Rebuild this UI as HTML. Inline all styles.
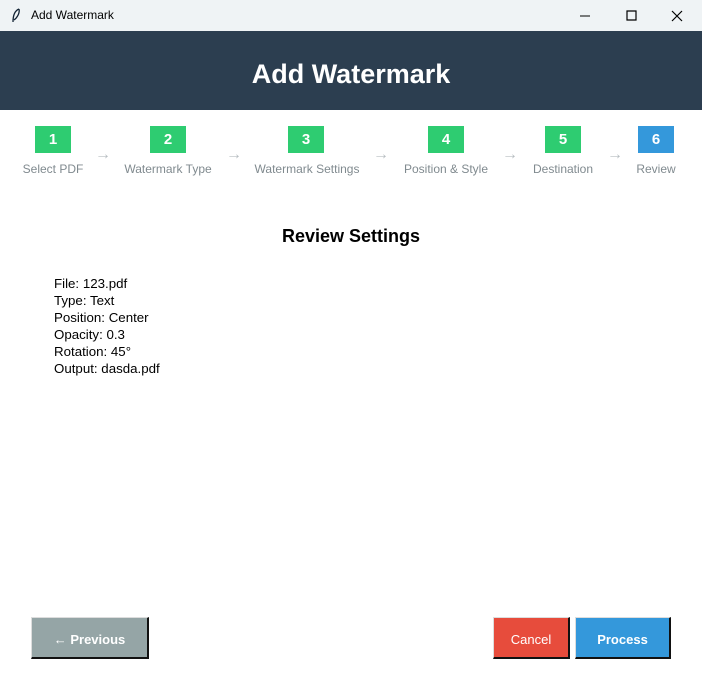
<!DOCTYPE html>
<html><head><style>
body{margin:0;width:702px;height:682px;overflow:hidden;background:#fff;font-family:"Liberation Sans",sans-serif;position:relative}
.tb{position:absolute;left:0;top:0;width:702px;height:31px;background:#eff3f5}
.tb span{position:absolute;left:31px;top:8px;font-size:12px;color:#000}
.hd{position:absolute;left:0;top:31px;width:702px;height:79px;background:#2c3e50;color:#fff;font-weight:bold;font-size:27px;text-align:center;line-height:86px}
.b{position:absolute;top:126px;width:36px;height:27px;background:#2ecc71;color:#fff;font-weight:bold;font-size:15px;text-align:center;line-height:28px}
.l{position:absolute;top:162px;font-size:12px;color:#808a8f;white-space:nowrap;transform:translateX(-50%)}
.a{position:absolute;top:146px;font-size:16px;color:#b8bec2}
.t{position:absolute;top:226px;left:0;width:702px;text-align:center;font-weight:bold;font-size:18px}
.r{position:absolute;left:54px;top:275px;font-size:13.3px;line-height:17px}
.btn{position:absolute;top:617px;height:42px;color:#fff;font-size:13px;text-align:center;line-height:44px;box-sizing:border-box;border-right:2px solid #111;border-bottom:2px solid #111;border-top:1px solid #ddd;border-left:1px solid #ddd}
</style></head><body>
<div class="tb"><svg style="position:absolute;left:11px;top:8px" width="10" height="15"><path d="M8 1 C3 3 2 9 2 14 M8 1 C9 5 6 10 3 12" stroke="#123" fill="none" stroke-width="1.3"/></svg><span>Add Watermark</span>
<svg style="position:absolute;left:580px;top:10px" width="110" height="12"><path d="M0 6h10" stroke="#000"/><path d="M47 1h9v9h-9z" stroke="#000" fill="none" stroke-width="1.2"/><path d="M92 1l10 10M102 1l-10 10" stroke="#000" stroke-width="1.2"/></svg></div>
<div class="hd">Add Watermark</div>
<div class="b" style="left:35px">1</div><div class="b" style="left:150px">2</div><div class="b" style="left:288px">3</div><div class="b" style="left:428px">4</div><div class="b" style="left:545px">5</div><div class="b" style="left:638px;background:#3498db">6</div>
<div class="l" style="left:53px">Select PDF</div><div class="l" style="left:168px">Watermark Type</div><div class="l" style="left:307px">Watermark Settings</div><div class="l" style="left:446px">Position &amp; Style</div><div class="l" style="left:563px">Destination</div><div class="l" style="left:656px">Review</div>
<div class="a" style="left:95px">→</div><div class="a" style="left:226px">→</div><div class="a" style="left:373px">→</div><div class="a" style="left:502px">→</div><div class="a" style="left:607px">→</div>
<div class="t">Review Settings</div>
<div class="r">File: 123.pdf<br>Type: Text<br>Position: Center<br>Opacity: 0.3<br>Rotation: 45°<br>Output: dasda.pdf</div>
<div class="btn" style="left:31px;width:118px;background:#95a5a6;font-weight:bold">← Previous</div>
<div class="btn" style="left:493px;width:77px;background:#e74c3c">Cancel</div>
<div class="btn" style="left:575px;width:96px;background:#3498db;font-weight:bold">Process</div>
</body></html>
